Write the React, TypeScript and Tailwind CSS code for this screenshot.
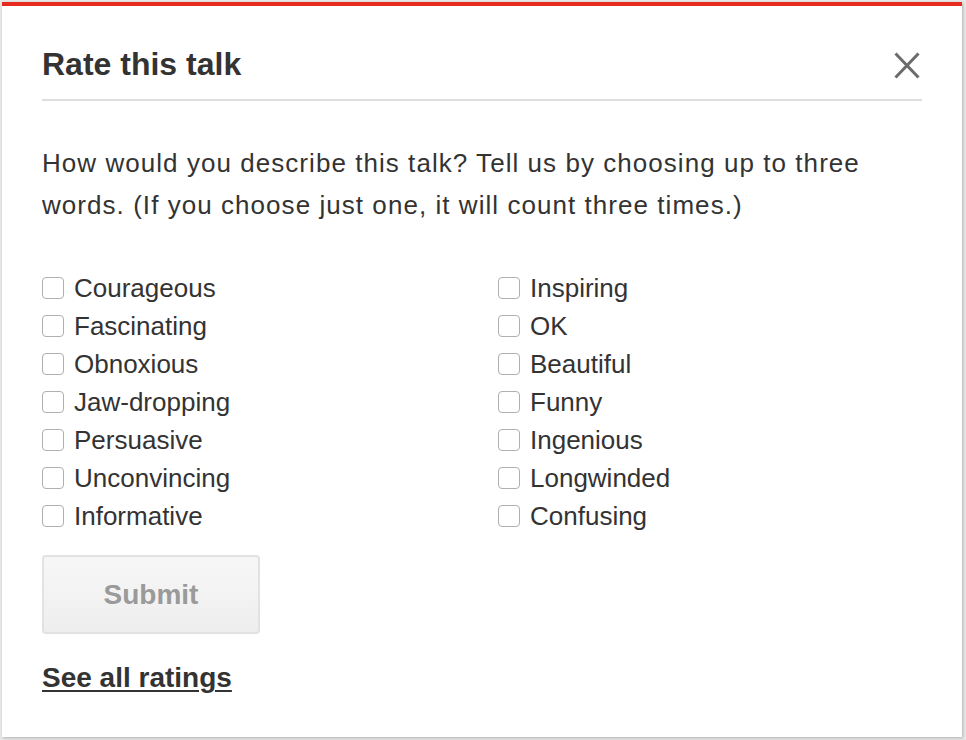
import { useState } from "react";

const leftWords = [
  "Courageous",
  "Fascinating",
  "Obnoxious",
  "Jaw-dropping",
  "Persuasive",
  "Unconvincing",
  "Informative",
];
const rightWords = [
  "Inspiring",
  "OK",
  "Beautiful",
  "Funny",
  "Ingenious",
  "Longwinded",
  "Confusing",
];

const WordBox = ({
  word,
  checked,
  onToggle,
}: {
  word: string;
  checked: boolean;
  onToggle: () => void;
}) => (
  <label className="flex h-[38px] cursor-pointer items-center">
    <span
      className={`flex h-[22px] w-[22px] shrink-0 items-center justify-center rounded-[4px] border ${
        checked ? "border-[#e62b1e] bg-[#e62b1e]" : "border-[#b0b0b0] bg-white"
      }`}
    >
      {checked && (
        <svg width="14" height="14" viewBox="0 0 14 14" fill="none">
          <path d="M2 7l3.5 3.5L12 3" stroke="#fff" strokeWidth="2" />
        </svg>
      )}
    </span>
    <input
      type="checkbox"
      className="hidden"
      checked={checked}
      onChange={onToggle}
    />
    <span className="ml-[10px] text-[26px] leading-[38px] text-[#333]">
      {word}
    </span>
  </label>
);

export default function App() {
  const [picked, setPicked] = useState<string[]>([]);

  const toggle = (w: string) => {
    setPicked((prev) =>
      prev.includes(w)
        ? prev.filter((p) => p !== w)
        : prev.length < 3
        ? [...prev, w]
        : prev
    );
  };

  return (
    <div
      className="h-[740px] w-[966px] overflow-hidden bg-[#e9e9e9] pl-[2px] pt-[2px]"
      style={{ fontFamily: '"Liberation Sans", Arial, sans-serif' }}
    >
      <div className="h-[735px] w-[960px] border-t-4 border-[#e62b1e] bg-white px-[40px] pt-[40px] shadow-[1px_1px_3px_rgba(0,0,0,0.25)]">
        {/* header */}
        <div className="flex items-start justify-between border-b-2 border-[#dedede] pb-[17px]">
          <h2 className="text-[32px] font-bold leading-[36px] text-[#333]">
            Rate this talk
          </h2>
          <button className="mr-[2px] mt-[6px]" aria-label="Close">
            <svg width="26" height="27" viewBox="0 0 26 27">
              <path
                d="M1.5 1.5L24.5 25.5M24.5 1.5L1.5 25.5"
                stroke="#6b6b6b"
                strokeWidth="3"
              />
            </svg>
          </button>
        </div>

        <p className="mt-[41px] text-[26px] leading-[42px] tracking-[1.05px] text-[#333]">
          How would you describe this talk? Tell us by choosing up to three
          words. (If you choose just one, it will count three times.)
        </p>

        <div className="mt-[43px] grid grid-cols-[456px_1fr]">
          <div className="flex flex-col">
            {leftWords.map((w) => (
              <WordBox
                key={w}
                word={w}
                checked={picked.includes(w)}
                onToggle={() => toggle(w)}
              />
            ))}
          </div>
          <div className="flex flex-col">
            {rightWords.map((w) => (
              <WordBox
                key={w}
                word={w}
                checked={picked.includes(w)}
                onToggle={() => toggle(w)}
              />
            ))}
          </div>
        </div>

        <button
          disabled={picked.length === 0}
          className="mt-[20px] h-[79px] w-[218px] rounded-[4px] border-2 border-[#e2e2e2] bg-gradient-to-b from-[#f7f7f7] to-[#eeeeee] text-[28px] font-bold text-[#9a9a9a]"
        >
          Submit
        </button>

        <div className="mt-[28px]">
          <a
            href="#"
            className="text-[28px] font-bold leading-[32px] text-[#333] underline decoration-2 underline-offset-[3px]"
          >
            See all ratings
          </a>
        </div>
      </div>
    </div>
  );
}
